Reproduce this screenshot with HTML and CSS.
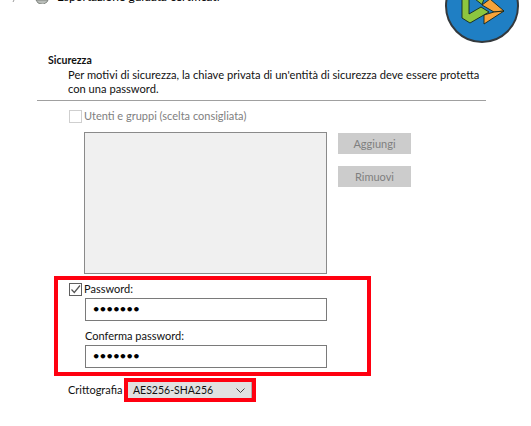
FILE: index.html
```html
<!DOCTYPE html>
<html>
<head>
	<title>Esportazione guidata certificati</title>
	<link rel="stylesheet" href="styles.css">
</head>
<body>
	<div class="topbar">
		<svg class="back" width="5" height="3" viewBox="0 0 5 3"><path d="M3 0 L2 2" fill="none" stroke="#9a9a9a"/></svg>
		<svg class="wizard" width="14" height="5" viewBox="0 0 14 5"><path d="M1 0 L3 3 L8 4.500 L12 2 L13 0 Z" fill="#b9bdb9" stroke="#70756e" stroke-width="0.8"/></svg>
		<span class="wiztitle">Esportazione guidata certificati</span>
	</div>
	<svg class="logo" width="76" height="44" viewBox="444 0 76 44">
		<circle cx="482" cy="6" r="36" fill="#1f7fc4" stroke="#33393d" stroke-width="2"/>
		<path d="M462 -1 L462 18 L470 23 L489 12 L481 7 L469 14 L469 -1 Z" fill="#8cc63f" stroke="#15261c" stroke-width="0.9"/>
		<path d="M475 -1 L482 4.500 L484 -1 Z" fill="#8cc63f" stroke="#15261c" stroke-width="0.9"/>
		<path d="M482 5 L490 -1 L504 11 L494 12 Z" fill="#f7a33a" stroke="#15261c" stroke-width="0.9"/>
		<path d="M484 15 L494 12 L504 11 L484 24 Z" fill="#f7a33a" stroke="#15261c" stroke-width="0.9"/>
	</svg>

	<section class="header">
		<div class="h-title">Sicurezza</div>
		<p class="h-text">Per motivi di sicurezza, la chiave privata di un'entità di sicurezza deve essere protetta<br>con una password.</p>
	</section>
	<div class="rule"></div>

	<div class="check-row disabled">
		<span class="check"></span>
		<span>Utenti e gruppi (scelta consigliata)</span>
	</div>

	<div class="users">
		<div class="listbox"></div>
		<div class="side-btns">
			<div class="btn">Aggiungi</div>
			<div class="btn">Rimuovi</div>
		</div>
	</div>

	<div class="redbox pass">
		<div class="check-row">
			<span class="check on">
				<svg width="11" height="11" viewBox="0 0 11 11"><path d="M1.500 5.500 L4.300 8.500 L10 1.500" fill="none" stroke="#555" stroke-width="1.200"/></svg>
			</span>
			<span>Password:</span>
		</div>
		<div class="field">•••••••</div>
		<div class="field-label">Conferma password:</div>
		<div class="field second">•••••••</div>
	</div>

	<div class="crypt-row">
		<span class="crypt-label">Crittografia</span>
		<div class="redbox small">
			<div class="combo">
				<span>AES256-SHA256</span>
				<svg width="9" height="5" viewBox="0 0 9 5"><path d="M0.500 0.500 L4.500 4.500 L8.500 0.500" fill="none" stroke="#444" stroke-width="1"/></svg>
			</div>
		</div>
	</div>
</body>
</html>
```

FILE: styles.css
```css
html, body {
	margin: 0;
	padding: 0;
}

body {
	position: relative;
	width: 531px;
	height: 426px;
	overflow: hidden;
	background: #fff;
	font-family: Lato, "Open Sans", sans-serif;
	font-size: 11px;
	line-height: 14px;
	color: #111;
}

.topbar {
	display: flex;
	align-items: flex-end;
	height: 4px;
	padding-left: 11px;
	overflow: hidden;
}

.topbar svg {
	flex: none;
	align-self: flex-start;
}

.back {
	margin-right: 19px;
}

.wizard {
	margin-right: 8px;
}

.wiztitle {
	flex: none;
	font-size: 12px;
	color: #000;
}

.logo {
	position: absolute;
	left: 444px;
	top: 0;
}

.header {
	padding: 49px 0 0 48px;
}

.h-title {
	font-weight: bold;
	font-size: 10.500px;
}

.h-text {
	margin: 1px 0 0 20px;
	font-size: 11.150px;
}

.rule {
	height: 1px;
	margin: 4px 45px 0 37px;
	background: #a0a0a0;
}

.check-row {
	display: flex;
	align-items: center;
	gap: 2px;
	height: 16px;
}

.check {
	box-sizing: border-box;
	display: block;
	width: 13px;
	height: 13px;
	border: 1px solid #cfcfcf;
	background: #fff;
}

.check.on {
	border-color: #5f5f5f;
}

.check.on svg {
	display: block;
}

.disabled {
	margin: 7px 0 0 69px;
	color: #808080;
}

.users {
	display: flex;
	margin: 8px 0 0 84px;
}

.listbox {
	box-sizing: border-box;
	width: 243px;
	height: 142px;
	background: #f0f0f0;
	border: 1px solid #8a8a8a;
}

.side-btns {
	display: flex;
	flex-direction: column;
	gap: 12px;
	margin: 1px 0 0 11px;
}

.btn {
	width: 73px;
	height: 21px;
	line-height: 21px;
	text-align: center;
	background: #cccccc;
	color: #7f7f7f;
}

.redbox {
	box-sizing: border-box;
	border: 4px solid #ff0010;
}

.pass {
	width: 317px;
	height: 100px;
	margin: 2px 0 0 54px;
	padding: 1px 0 0 11px;
}

.field {
	box-sizing: border-box;
	width: 242px;
	height: 23px;
	margin: 1px 0 0 16px;
	padding-left: 6px;
	border: 1px solid #7a7a7a;
	line-height: 21px;
	font-family: "DejaVu Sans", sans-serif;
	font-size: 13px;
	font-weight: bold;
	letter-spacing: -1.600px;
	color: #000;
}

.field-label {
	margin: 8px 0 0 16px;
}

.field.second {
	margin-top: 2px;
}

.crypt-row {
	display: flex;
	align-items: center;
	margin: 2px 0 0 68px;
}

.crypt-label {
	width: 56px;
}

.small {
	width: 132px;
	height: 24px;
}

.combo {
	display: flex;
	align-items: center;
	justify-content: space-between;
	height: 16px;
	padding: 0 6px 0 5px;
	font-size: 10.500px;
	background: #e1e1e1;
	border-right: 1px solid #adadad;
}
```
